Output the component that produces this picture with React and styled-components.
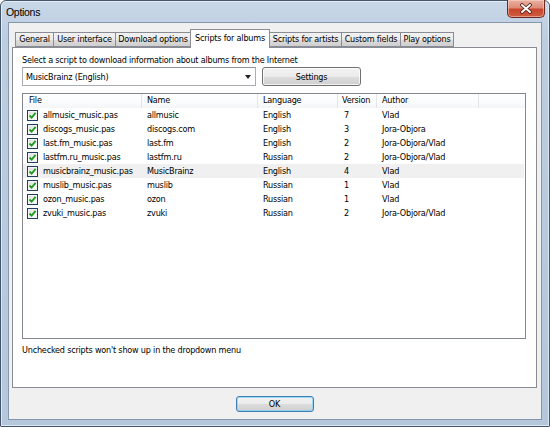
import React from "react";
import styled, { createGlobalStyle } from "styled-components";

const Global = createGlobalStyle`
  html, body { margin: 0; padding: 0; background: #fff; }
  body { width: 550px; height: 427px; overflow: hidden; }
  * { box-sizing: border-box; }
`;

const FONT = `"DejaVu Sans Condensed", "Liberation Sans", sans-serif`;

const Window = styled.div`
  width: 550px;
  height: 427px;
  border: 1px solid #44566c;
  border-radius: 6px 6px 1px 1px;
  background: linear-gradient(180deg, #c8d7e8 0px, #bccde0 40px, #b5c7db 100%);
  box-shadow: inset 0 0 0 1px rgba(255, 255, 255, 0.55);
  display: flex;
  flex-direction: column;
  font-family: ${FONT};
  font-size: 9px;
  letter-spacing: -0.2px;
  color: #000;
`;

const TitleBar = styled.div`
  height: 21px;
  display: flex;
  align-items: flex-start;
  padding-left: 5px;
`;

const Title = styled.div`
  font-family: "Liberation Sans", sans-serif;
  font-size: 10.5px;
  letter-spacing: -0.3px;
  line-height: 22px;
  color: #000;
  flex: 1;
`;

const CloseButton = styled.div`
  width: 38px;
  height: 18px;
  margin-top: -1px;
  margin-right: 4px;
  border: 1px solid #6a2a22;
  border-top: none;
  border-radius: 0 0 5px 5px;
  background: linear-gradient(180deg, #eab0a2 0%, #dd8c78 45%, #c8472e 55%, #cf5c3f 100%);
  box-shadow: inset 0 0 0 1px rgba(255, 220, 210, 0.5);
  display: flex;
  align-items: center;
  justify-content: center;
`;

const Client = styled.div`
  margin: 0 7px 6px 7px;
  flex: 1;
  background: #f0f0f0;
  border: 1px solid #8596ab;
  display: flex;
  flex-direction: column;
  padding: 6px 4px 0 3px;
`;

const TabStrip = styled.div`
  display: flex;
  align-items: flex-end;
  height: 18px;
  padding-left: 3px;
  position: relative;
  z-index: 1;
`;

const Tab = styled.div`
  width: ${(p) => p.$w}px;
  height: ${(p) => (p.$active ? 19 : 15)}px;
  margin-bottom: ${(p) => (p.$active ? -1 : 0)}px;
  border: 1px solid #898c95;
  border-bottom: ${(p) => (p.$active ? "none" : "1px solid #898c95")};
  margin-right: -1px;
  background: ${(p) =>
    p.$active ? "#fff" : "linear-gradient(180deg, #f2f2f2 0%, #ebebeb 50%, #dddddd 51%, #cfcfcf 100%)"};
  position: relative;
  z-index: ${(p) => (p.$active ? 2 : 1)};
  white-space: nowrap;
  text-align: center;
  line-height: ${(p) => (p.$active ? 16 : 13)}px;
  overflow: hidden;
`;

const Panel = styled.div`
  height: 341px;
  background: #fff;
  border: 1px solid #898c95;
  display: flex;
  flex-direction: column;
  padding: 6px 10px 0 9px;
`;

const Label = styled.div`
  line-height: 13px;
  height: 13px;
  white-space: nowrap;
`;

const ControlRow = styled.div`
  display: flex;
  gap: 6px;
  align-items: flex-start;
  height: 19px;
`;

const Combo = styled.div`
  width: 234px;
  height: 19px;
  border: 1px solid #abadb3;
  border-top-color: #8f939b;
  background: #fff;
  display: flex;
  align-items: center;
  padding-left: 3px;
  padding-right: 4px;
`;

const ComboText = styled.div`
  flex: 1;
`;

const Arrow = styled.div`
  width: 0;
  height: 0;
  border-left: 3.5px solid transparent;
  border-right: 3.5px solid transparent;
  border-top: 4px solid #222;
`;

const Button = styled.div`
  width: ${(p) => p.$w}px;
  height: ${(p) => p.$h}px;
  border: 1px solid ${(p) => (p.$default ? "#3c7fb1" : "#707070")};
  border-radius: 3px;
  background: linear-gradient(180deg, #f2f2f2 0%, #ebebeb 50%, #dddddd 51%, #cfcfcf 100%);
  box-shadow: inset 0 0 0 1px ${(p) => (p.$default ? "rgba(120, 210, 245, 0.7)" : "rgba(255,255,255,0.75)")};
  display: flex;
  align-items: center;
  justify-content: center;
`;

const List = styled.div`
  margin-top: 7px;
  width: 504px;
  height: 246px;
  border: 1px solid #828790;
  background: #fff;
`;

const COLS = "119px 116px 80px 39px 102px 1fr";

const HeaderRow = styled.div`
  display: grid;
  grid-template-columns: ${COLS};
  height: 14px;
  background: linear-gradient(180deg, #ffffff 0%, #fbfcfd 60%, #f3f4f6 100%);
`;

const HeaderCell = styled.div`
  padding-left: ${(p) => p.$pl || 5}px;
  line-height: 13px;
  border-right: ${(p) => (p.$last ? "none" : "1px solid #e3e5e8")};
  white-space: nowrap;
  overflow: hidden;
`;

const Row = styled.div`
  display: grid;
  grid-template-columns: ${COLS};
  height: 14px;
  background: ${(p) => (p.$hl ? "#f0f0f0" : "transparent")};
  margin-right: 1px;
`;

const Cell = styled.div`
  padding-left: ${(p) => p.$pl || 5}px;
  line-height: 14px;
  white-space: nowrap;
  overflow: hidden;
  display: flex;
  align-items: center;
  gap: 5px;
`;

const Check = styled.div`
  width: 11px;
  height: 11px;
  flex: none;
  border: 1px solid #1e3f63;
  background: linear-gradient(135deg, #dcdcdc 0%, #f6f6f6 70%, #ffffff 100%);
  box-shadow: inset 0 0 0 1px #f4f4f4;
  display: flex;
  align-items: center;
  justify-content: center;
`;

const Note = styled.div`
  margin-top: 5px;
  line-height: 13px;
  white-space: nowrap;
`;

const Footer = styled.div`
  display: flex;
  justify-content: center;
  padding-top: 8px;
`;

const tabs = [
  { label: "General", w: 39 },
  { label: "User interface", w: 63 },
  { label: "Download options", w: 76 },
  { label: "Scripts for albums", w: 80, active: true },
  { label: "Scripts for artists", w: 73 },
  { label: "Custom fields", w: 60 },
  { label: "Play options", w: 54 },
];

const rows = [
  ["allmusic_music.pas", "allmusic", "English", "7", "Vlad"],
  ["discogs_music.pas", "discogs.com", "English", "3", "Jora-Objora"],
  ["last.fm_music.pas", "last.fm", "English", "2", "Jora-Objora/Vlad"],
  ["lastfm.ru_music.pas", "lastfm.ru", "Russian", "2", "Jora-Objora/Vlad"],
  ["musicbrainz_music.pas", "MusicBrainz", "English", "4", "Vlad", true],
  ["muslib_music.pas", "muslib", "Russian", "1", "Vlad"],
  ["ozon_music.pas", "ozon", "Russian", "1", "Vlad"],
  ["zvuki_music.pas", "zvuki", "Russian", "2", "Jora-Objora/Vlad"],
];

const CheckMark = () => (
  <svg width="9" height="9" viewBox="0 0 9 9">
    <path d="M1.5 4.5 L3.6 6.6 L7.6 1.8" fill="none" stroke="#1f9a1f" strokeWidth="1.8" />
  </svg>
);

const CloseGlyph = () => (
  <svg width="14" height="11" viewBox="0 0 14 11">
    <path d="M3 2 L11 9 M11 2 L3 9" stroke="#4a1a14" strokeWidth="3.6" strokeLinecap="round" />
    <path d="M3 2 L11 9 M11 2 L3 9" stroke="#ffffff" strokeWidth="2" strokeLinecap="round" />
  </svg>
);

export default function App() {
  return (
    <>
      <Global />
      <Window>
        <TitleBar>
          <Title>Options</Title>
          <CloseButton>
            <CloseGlyph />
          </CloseButton>
        </TitleBar>
        <Client>
          <TabStrip>
            {tabs.map((t) => (
              <Tab key={t.label} $w={t.w} $active={t.active}>
                {t.label}
              </Tab>
            ))}
          </TabStrip>
          <Panel>
            <Label>Select a script to download information about albums from the Internet</Label>
            <ControlRow>
              <Combo>
                <ComboText>MusicBrainz (English)</ComboText>
                <Arrow />
              </Combo>
              <Button $w={99} $h={19}>Settings</Button>
            </ControlRow>
            <List>
              <HeaderRow>
                <HeaderCell $pl={6}>File</HeaderCell>
                <HeaderCell>Name</HeaderCell>
                <HeaderCell>Language</HeaderCell>
                <HeaderCell $pl={4}>Version</HeaderCell>
                <HeaderCell>Author</HeaderCell>
                <HeaderCell $last />
              </HeaderRow>
              {rows.map((r) => (
                <Row key={r[0]} $hl={r[5]}>
                  <Cell $pl={4}>
                    <Check>
                      <CheckMark />
                    </Check>
                    {r[0]}
                  </Cell>
                  <Cell>{r[1]}</Cell>
                  <Cell>{r[2]}</Cell>
                  <Cell $pl={6}>{r[3]}</Cell>
                  <Cell>{r[4]}</Cell>
                  <Cell />
                </Row>
              ))}
            </List>
            <Note>Unchecked scripts won't show up in the dropdown menu</Note>
          </Panel>
          <Footer>
            <Button $w={78} $h={16} $default>OK</Button>
          </Footer>
        </Client>
      </Window>
    </>
  );
}
